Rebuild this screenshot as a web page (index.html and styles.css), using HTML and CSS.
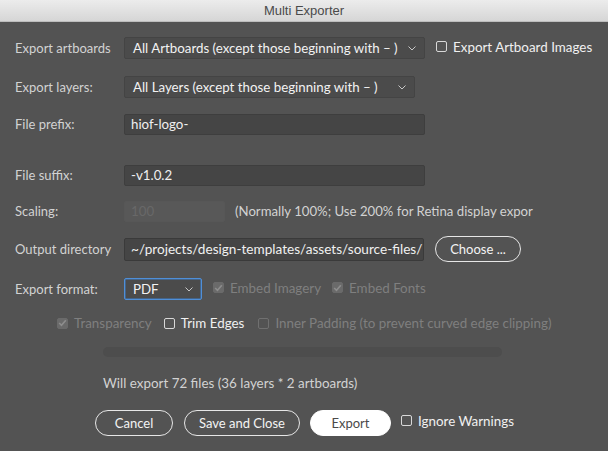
FILE: index.html
```html
<!DOCTYPE html>
<html>
<head>
<meta charset="utf-8">
<title>Multi Exporter</title>
<link rel="stylesheet" href="styles.css">
</head>
<body>
<div class="window">
  <div class="titlebar">Multi Exporter</div>
  <div class="content">
    <div class="row row-1">
      <span class="label">Export artboards</span>
      <div class="select select-wide">
        <span>All Artboards (except those beginning with – )</span>
        <svg class="chev" width="8" height="5" viewBox="0 0 8 5"><path d="M0.5 0.5 L4 4 L7.5 0.5" fill="none" stroke="#c8c8c8" stroke-width="1"/></svg>
      </div>
      <label class="check check-after-select"><span class="box"></span><span class="ctext">Export Artboard Images</span></label>
    </div>
    <div class="row row-2">
      <span class="label">Export layers:</span>
      <div class="select select-layers">
        <span>All Layers (except those beginning with – )</span>
        <svg class="chev" width="8" height="5" viewBox="0 0 8 5"><path d="M0.5 0.5 L4 4 L7.5 0.5" fill="none" stroke="#c8c8c8" stroke-width="1"/></svg>
      </div>
    </div>
    <div class="row row-3">
      <span class="label">File prefix:</span>
      <div class="input input-wide">hiof-logo-</div>
    </div>
    <div class="row row-4">
      <span class="label">File suffix:</span>
      <div class="input input-wide">-v1.0.2</div>
    </div>
    <div class="row row-5">
      <span class="label">Scaling:</span>
      <div class="input input-disabled">100</div>
      <span class="note">(Normally 100%; Use 200% for Retina display expor</span>
    </div>
    <div class="row row-6">
      <span class="label">Output directory</span>
      <div class="input input-dir">~/projects/design-templates/assets/source-files/</div>
      <button class="btn btn-choose">Choose ...</button>
    </div>
    <div class="row row-7">
      <span class="label">Export format:</span>
      <div class="select select-format">
        <span>PDF</span>
        <svg class="chev" width="8" height="5" viewBox="0 0 8 5"><path d="M0.5 0.5 L4 4 L7.5 0.5" fill="none" stroke="#c8c8c8" stroke-width="1"/></svg>
      </div>
      <label class="check check-disabled check-embed"><span class="box box-checked"><svg width="9" height="8" viewBox="0 0 9 8"><path d="M1.2 4 L3.5 6.3 L7.8 1.2" fill="none" stroke="#8d8d8d" stroke-width="1.6"/></svg></span><span class="ctext">Embed Imagery</span></label>
      <label class="check check-disabled check-fonts"><span class="box box-checked"><svg width="9" height="8" viewBox="0 0 9 8"><path d="M1.2 4 L3.5 6.3 L7.8 1.2" fill="none" stroke="#8d8d8d" stroke-width="1.6"/></svg></span><span class="ctext">Embed Fonts</span></label>
    </div>
    <div class="row row-8">
      <label class="check check-disabled"><span class="box box-checked"><svg width="9" height="8" viewBox="0 0 9 8"><path d="M1.2 4 L3.5 6.3 L7.8 1.2" fill="none" stroke="#8d8d8d" stroke-width="1.6"/></svg></span><span class="ctext">Transparency</span></label>
      <label class="check check-trim"><span class="box"></span><span class="ctext">Trim Edges</span></label>
      <label class="check check-disabled check-inner"><span class="box box-disabled"></span><span class="ctext">Inner Padding (to prevent curved edge clipping)</span></label>
    </div>
    <div class="progress"></div>
    <div class="summary">Will export 72 files (36 layers * 2 artboards)</div>
    <div class="actions">
      <button class="btn btn-cancel">Cancel</button>
      <button class="btn btn-save">Save and Close</button>
      <button class="btn btn-primary">Export</button>
      <label class="check check-ignore"><span class="box"></span><span class="ctext">Ignore Warnings</span></label>
    </div>
  </div>
</div>
</body>
</html>
```

FILE: styles.css
```css
html, body {
  margin: 0;
  padding: 0;
}
body {
  background: #535353;
  font-family: "Lato", "Open Sans", sans-serif;
  font-size: 13px;
  color: #d4d4d4;
  width: 608px;
  height: 451px;
  overflow: hidden;
}
.window {
  display: flex;
  flex-direction: column;
}
.titlebar {
  height: 22px;
  box-sizing: border-box;
  background: linear-gradient(#ececec, #d6d6d6);
  border-bottom: 1px solid #bdbdbd;
  color: #4a4a4a;
  font-family: "Liberation Sans", Arial, sans-serif;
  font-size: 13px;
  line-height: 22px;
  text-align: center;
}
.content {
  display: flex;
  flex-direction: column;
  padding-top: 14px;
}
.row {
  display: flex;
  align-items: center;
  height: 24px;
  padding-left: 15px;
}
.row-2 { margin-top: 15px; }
.row-3 { margin-top: 13px; }
.row-4 { margin-top: 27px; }
.row-5 { margin-top: 12px; }
.row-6 { margin-top: 14px; }
.row-7 { margin-top: 16px; }
.row-8 { margin-top: 10px; padding-left: 57px; }

.label {
  width: 109px;
  flex: none;
  color: #d2d2d2;
}
.select {
  box-sizing: border-box;
  height: 22px;
  display: flex;
  align-items: center;
  justify-content: space-between;
  padding: 0 8px 0 8px;
  background: #4b4b4b;
  border: 1px solid #444444;
  border-radius: 2px;
  color: #f2f2f2;
  font-size: 13.3px;
  white-space: nowrap;
}
.select-wide { width: 301px; }
.select-layers { width: 291px; }
.select-format {
  width: 78px;
  border: 1px solid #4f8fd8;
  box-shadow: inset 0 0 0 0.5px #3f7fc8;
}
.chev { flex: none; }

.input {
  box-sizing: border-box;
  height: 21px;
  display: flex;
  align-items: center;
  padding: 0 6px;
  background: #454545;
  border: 1px solid #3e3e3e;
  border-radius: 2px;
  color: #f0f0f0;
  font-size: 13.3px;
  white-space: nowrap;
  overflow: hidden;
}
.input-wide { width: 301px; }
.input-disabled {
  width: 101px;
  background: #585858;
  border-color: #575757;
  color: #686868;
}
.input-dir {
  width: 300px;
  height: 23px;
  border: 1px solid #3a3a3a;
  font-size: 13.6px;
}
.note {
  margin-left: 10px;
  color: #d2d2d2;
  font-size: 13.2px;
  white-space: nowrap;
}

.check {
  display: flex;
  align-items: center;
  gap: 6px;
  color: #f0f0f0;
  font-size: 13.4px;
  white-space: nowrap;
}
.box {
  box-sizing: border-box;
  width: 11px;
  height: 11px;
  border: 1px solid #d8d8d8;
  border-radius: 2px;
  display: flex;
  align-items: center;
  justify-content: center;
  flex: none;
}
.box-checked {
  background: #6a6a6a;
  border-color: #6a6a6a;
}
.box-disabled {
  border-color: #707070;
}
.check-disabled { color: #7f7f7f; }
.check-after-select { margin-left: 11px; margin-top: -3px; }
.check-embed { margin-left: 11px; margin-top: -3px; }
.check-fonts { margin-left: 11px; margin-top: -3px; }
.check-trim { margin-left: 12px; }
.check-inner { margin-left: 14px; }
.check-ignore { margin-left: 10px; margin-top: -5px; }

.btn {
  box-sizing: border-box;
  height: 26px;
  border: 1px solid #e6e6e6;
  border-radius: 13px;
  background: transparent;
  color: #f4f4f4;
  font-family: "Lato", "Open Sans", sans-serif;
  font-size: 13px;
  padding: 0;
  margin: 0;
}
.btn-choose {
  width: 86px;
  margin-left: 11px;
}
.progress {
  margin: 12px 0 0 103px;
  width: 399px;
  height: 10px;
  border-radius: 5px;
  background: #4d4d4d;
}
.summary {
  margin: 18px 0 0 103px;
  height: 16px;
  line-height: 16px;
  color: #d2d2d2;
  font-size: 13.4px;
}
.actions {
  display: flex;
  align-items: center;
  margin: 19px 0 0 95px;
}
.btn-cancel { width: 78px; }
.btn-save { width: 116px; margin-left: 11px; }
.btn-primary {
  width: 81px;
  margin-left: 10px;
  background: #ffffff;
  border-color: #ffffff;
  color: #4a4a4a;
}
```
